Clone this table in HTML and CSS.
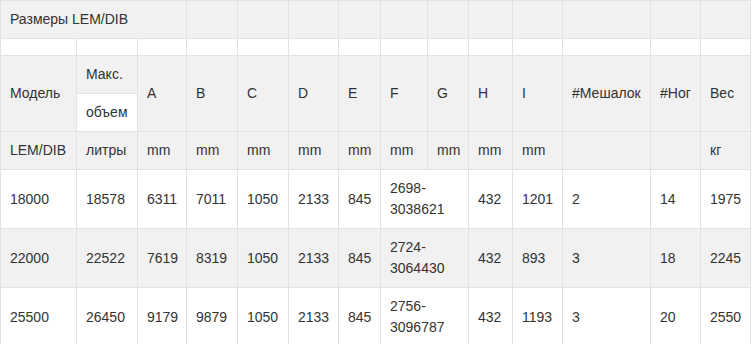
FILE: index.html
```html
<!DOCTYPE html>
<html lang="ru">
<head>
<meta charset="utf-8">
<title>Размеры LEM/DIB</title>
<link rel="stylesheet" href="styles.css">
</head>
<body>
<table class="spec">
  <colgroup>
    <col class="c-model"><col class="c-vol"><col class="c-a"><col class="c-b"><col class="c-c"><col class="c-d"><col class="c-e"><col class="c-f"><col class="c-g"><col class="c-h"><col class="c-i"><col class="c-mix"><col class="c-legs"><col class="c-weight">
  </colgroup>
  <tbody>
    <tr class="odd">
      <td colspan="3">Размеры LEM/DIB</td>
      <td></td><td></td><td></td><td></td><td></td><td></td><td></td><td></td><td></td><td></td><td></td>
    </tr>
    <tr class="even empty">
      <td></td><td></td><td></td><td></td><td></td><td></td><td></td><td></td><td></td><td></td><td></td><td></td><td></td><td></td>
    </tr>
    <tr class="odd">
      <td rowspan="2">Модель</td>
      <td>Макс.</td>
      <td rowspan="2">A</td>
      <td rowspan="2">B</td>
      <td rowspan="2">C</td>
      <td rowspan="2">D</td>
      <td rowspan="2">E</td>
      <td rowspan="2">F</td>
      <td rowspan="2">G</td>
      <td rowspan="2">H</td>
      <td rowspan="2">I</td>
      <td rowspan="2">#Мешалок</td>
      <td rowspan="2">#Ног</td>
      <td rowspan="2">Вес</td>
    </tr>
    <tr class="even">
      <td>объем</td>
    </tr>
    <tr class="odd">
      <td>LEM/DIB</td><td>литры</td><td>mm</td><td>mm</td><td>mm</td><td>mm</td><td>mm</td><td>mm</td><td>mm</td><td>mm</td><td>mm</td><td></td><td></td><td>кг</td>
    </tr>
    <tr class="even">
      <td>18000</td><td>18578</td><td>6311</td><td>7011</td><td>1050</td><td>2133</td><td>845</td><td colspan="2">2698-3038621</td><td>432</td><td>1201</td><td>2</td><td>14</td><td>1975</td>
    </tr>
    <tr class="odd">
      <td>22000</td><td>22522</td><td>7619</td><td>8319</td><td>1050</td><td>2133</td><td>845</td><td colspan="2">2724-3064430</td><td>432</td><td>893</td><td>3</td><td>18</td><td>2245</td>
    </tr>
    <tr class="even">
      <td>25500</td><td>26450</td><td>9179</td><td>9879</td><td>1050</td><td>2133</td><td>845</td><td colspan="2">2756-3096787</td><td>432</td><td>1193</td><td>3</td><td>20</td><td>2550</td>
    </tr>
  </tbody>
</table>
</body>
</html>
```
FILE: styles.css
```css
html, body {
  margin: 0;
  padding: 0;
  background: #fff;
}

.spec {
  width: 750px;
  border-collapse: collapse;
  table-layout: fixed;
  font-family: "Liberation Sans", Arial, sans-serif;
  font-size: 14px;
  line-height: 21px;
  color: #333;
}

.spec td {
  border: 1px solid #e2e2e2;
  padding: 8px 8px 8px 9px;
  vertical-align: middle;
  text-align: left;
}

.spec .odd td {
  background: #f1f1f1;
}

.spec .even td {
  background: #fff;
}

.c-model { width: 76px; }
.c-vol { width: 61px; }
.c-a { width: 49px; }
.c-b { width: 51px; }
.c-c { width: 51px; }
.c-d { width: 50px; }
.c-e { width: 42px; }
.c-f { width: 47px; }
.c-g { width: 41px; }
.c-h { width: 44px; }
.c-i { width: 50px; }
.c-mix { width: 88px; }
.c-legs { width: 50px; }
.c-weight { width: 50px; }
```
